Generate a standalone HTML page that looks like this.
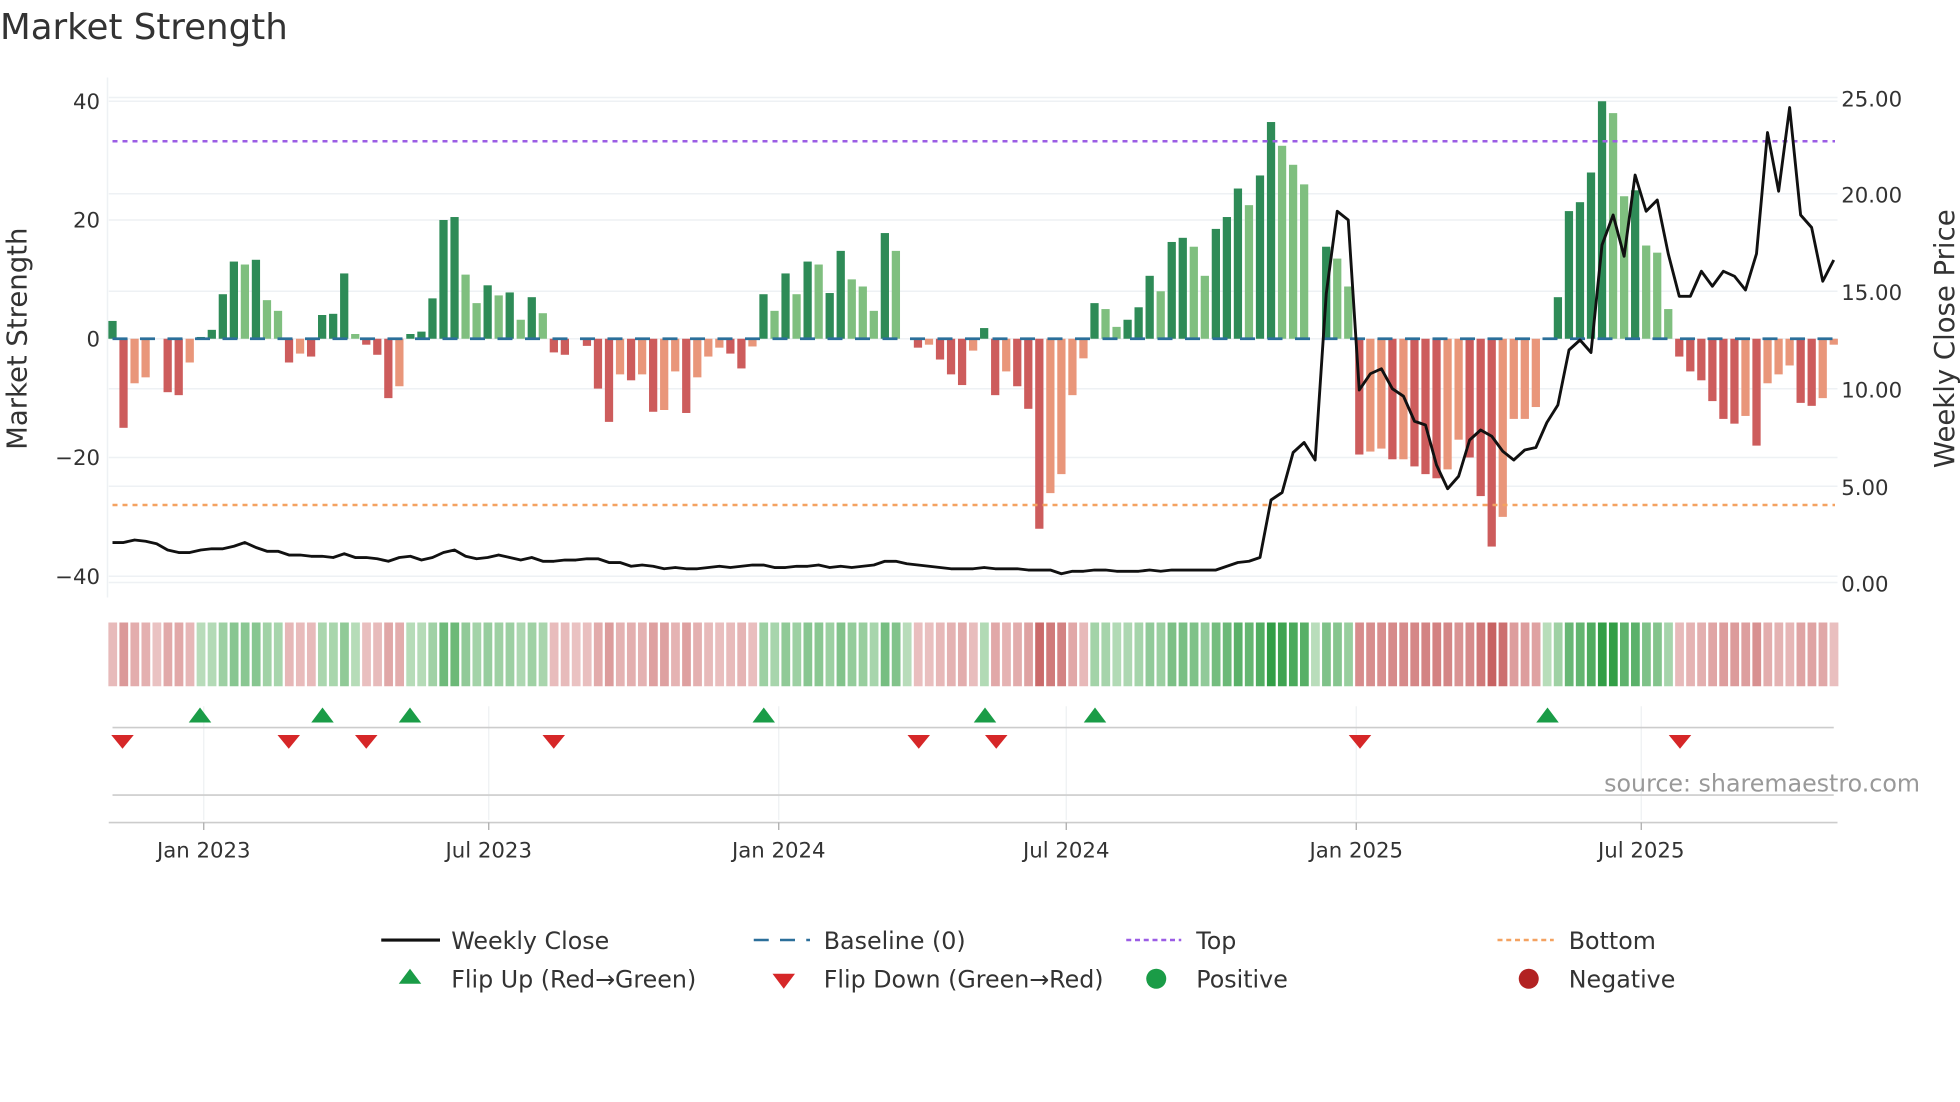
<!DOCTYPE html>
<html><head><meta charset="utf-8"><style>
html,body{margin:0;padding:0;background:#fff;}
svg{display:block;font-family:"DejaVu Sans","Liberation Sans",sans-serif;}
</style></head><body>
<svg id="s" width="1960" height="1102" viewBox="0 0 1568 881.6" xmlns="http://www.w3.org/2000/svg">
<rect width="1568" height="882" fill="#fff"/>
<text x="0" y="31" font-size="28.5" fill="#333">Market Strength</text>
<g stroke="#eef1f4" stroke-width="1.2">
<line x1="87" x2="1470" y1="81" y2="81"/><line x1="87" x2="1470" y1="176" y2="176"/>
<line x1="87" x2="1470" y1="271" y2="271"/><line x1="87" x2="1470" y1="366" y2="366"/>
<line x1="87" x2="1470" y1="461" y2="461"/>
<line x1="87" x2="1470" y1="78" y2="78"/><line x1="87" x2="1470" y1="155" y2="155"/>
<line x1="87" x2="1470" y1="233" y2="233"/><line x1="87" x2="1470" y1="311" y2="311"/>
<line x1="87" x2="1470" y1="389" y2="389"/><line x1="87" x2="1470" y1="466" y2="466"/>
<line x1="86" x2="86" y1="62" y2="478"/>
</g>
<g font-size="17" fill="#333" text-anchor="end">
<text x="80" y="87">40</text><text x="80" y="182">20</text><text x="80" y="277">0</text>
<text x="80" y="372">−20</text><text x="80" y="467">−40</text>
</g>
<g font-size="17" fill="#333">
<text x="1473" y="85">25.00</text><text x="1473" y="162">20.00</text><text x="1473" y="240">15.00</text>
<text x="1473" y="318">10.00</text><text x="1473" y="396">5.00</text><text x="1473" y="473">0.00</text>
</g>
<text transform="translate(21,271) rotate(-90)" font-size="22" fill="#333" text-anchor="middle">Market Strength</text>
<text transform="translate(1563,271) rotate(-90)" font-size="22" fill="#333" text-anchor="middle">Weekly Close Price</text>
<g id="bars"></g>
<line x1="90" x2="1468" y1="271" y2="271" stroke="#2b6f9a" stroke-width="2.2" stroke-dasharray="12,10"/>
<line x1="90" x2="1468" y1="113" y2="113" stroke="#9b5de5" stroke-width="2" stroke-dasharray="4,4"/>
<line x1="90" x2="1468" y1="404" y2="404" stroke="#f4a261" stroke-width="2" stroke-dasharray="4,4"/>
<polyline id="price" fill="none" stroke="#111" stroke-width="2.3" stroke-linejoin="round"/>
<g id="heat"></g>
<g stroke="#eef0f2" stroke-width="1"><line x1="163" x2="163" y1="565" y2="656"/><line x1="391" x2="391" y1="565" y2="656"/><line x1="623" x2="623" y1="565" y2="656"/><line x1="853" x2="853" y1="565" y2="656"/><line x1="1085" x2="1085" y1="565" y2="656"/><line x1="1313" x2="1313" y1="565" y2="656"/></g>
<line x1="90" x2="1467" y1="582" y2="582" stroke="#ccc" stroke-width="1.3"/>
<line x1="90" x2="1467" y1="636" y2="636" stroke="#ccc" stroke-width="1.3"/>
<line x1="87" x2="1470" y1="658" y2="658" stroke="#ccc" stroke-width="1.3"/>
<g id="flips"></g>
<text x="1536" y="633" font-size="19" fill="#999" text-anchor="end">source: sharemaestro.com</text>
<g stroke="#aaa"><line x1="163" x2="163" y1="658" y2="664"/><line x1="391" x2="391" y1="658" y2="664"/><line x1="623" x2="623" y1="658" y2="664"/><line x1="853" x2="853" y1="658" y2="664"/><line x1="1085" x2="1085" y1="658" y2="664"/><line x1="1313" x2="1313" y1="658" y2="664"/></g>
<g font-size="17" fill="#333" text-anchor="middle">
<text x="163" y="686">Jan 2023</text><text x="391" y="686">Jul 2023</text><text x="623" y="686">Jan 2024</text>
<text x="853" y="686">Jul 2024</text><text x="1085" y="686">Jan 2025</text><text x="1313" y="686">Jul 2025</text>
</g>
<g font-size="19" fill="#333">
<line x1="305" x2="352" y1="752" y2="752" stroke="#111" stroke-width="2.5"/>
<text x="361" y="759">Weekly Close</text>
<line x1="603" x2="648" y1="752" y2="752" stroke="#2b6f9a" stroke-width="2" stroke-dasharray="12,9"/>
<text x="659" y="759">Baseline (0)</text>
<line x1="901" x2="945" y1="752" y2="752" stroke="#9b5de5" stroke-width="2" stroke-dasharray="4,3"/>
<text x="957" y="759">Top</text>
<line x1="1198" x2="1243" y1="752" y2="752" stroke="#f4a261" stroke-width="2" stroke-dasharray="4,3"/>
<text x="1255" y="759">Bottom</text>
<polygon points="319,787 337,787 328,775" fill="#1a9c47"/>
<text x="361" y="790">Flip Up (Red→Green)</text>
<polygon points="618,779 636,779 627,791" fill="#d62728"/>
<text x="659" y="790">Flip Down (Green→Red)</text>
<circle cx="925" cy="783" r="8" fill="#1a9c47"/>
<text x="957" y="790">Positive</text>
<circle cx="1223" cy="783" r="8" fill="#b22222"/>
<text x="1255" y="790">Negative</text>
</g>
</svg>
<script>
var V=[[3,'d'],[-15,'r'],[-7.5,'s'],[-6.5,'s'],[0,'z'],[-9,'r'],[-9.5,'r'],[-4,'s'],[0.3,'d'],[1.5,'d'],[7.5,'d'],[13,'d'],[12.5,'l'],[13.3,'d'],[6.5,'l'],[4.7,'l'],[-4,'r'],[-2.5,'s'],[-3,'r'],[4,'d'],[4.2,'d'],[11,'d'],[0.8,'l'],[-1,'r'],[-2.7,'r'],[-10,'r'],[-8,'s'],[0.8,'d'],[1.2,'d'],[6.8,'d'],[20,'d'],[20.5,'d'],[10.8,'l'],[6,'l'],[9,'d'],[7.3,'l'],[7.8,'d'],[3.2,'l'],[7,'d'],[4.3,'l'],[-2.3,'r'],[-2.7,'r'],[0,'z'],[-1.2,'r'],[-8.4,'r'],[-14,'r'],[-6,'s'],[-7,'r'],[-6,'s'],[-12.3,'r'],[-12,'s'],[-5.5,'s'],[-12.5,'r'],[-6.5,'s'],[-3,'s'],[-1.5,'s'],[-2.5,'r'],[-5,'r'],[-1.3,'s'],[7.5,'d'],[4.7,'l'],[11,'d'],[7.5,'l'],[13,'d'],[12.5,'l'],[7.7,'d'],[14.8,'d'],[10,'l'],[8.8,'l'],[4.7,'l'],[17.8,'d'],[14.8,'l'],[0.3,'z'],[-1.5,'r'],[-1,'s'],[-3.5,'r'],[-6,'r'],[-7.8,'r'],[-2,'s'],[1.8,'d'],[-9.5,'r'],[-5.5,'s'],[-8,'r'],[-11.8,'r'],[-32,'r'],[-26,'s'],[-22.8,'s'],[-9.5,'s'],[-3.3,'s'],[6,'d'],[5,'l'],[2,'l'],[3.2,'d'],[5.3,'d'],[10.6,'d'],[8,'l'],[16.3,'d'],[17,'d'],[15.5,'l'],[10.6,'l'],[18.5,'d'],[20.5,'d'],[25.3,'d'],[22.5,'l'],[27.5,'d'],[36.5,'d'],[32.5,'l'],[29.3,'l'],[26,'l'],[0,'z'],[15.5,'d'],[13.5,'l'],[8.8,'l'],[-19.5,'r'],[-19,'s'],[-18.5,'s'],[-20.3,'r'],[-20.3,'s'],[-21.5,'r'],[-22.8,'r'],[-23.5,'r'],[-22,'s'],[-17,'s'],[-20,'r'],[-26.5,'r'],[-35,'r'],[-30,'s'],[-13.5,'s'],[-13.5,'s'],[-11.5,'s'],[0.2,'d'],[7,'d'],[21.5,'d'],[23,'d'],[28,'d'],[40,'d'],[38,'l'],[24,'l'],[25,'d'],[15.7,'l'],[14.5,'l'],[5,'l'],[-3,'r'],[-5.5,'r'],[-7,'r'],[-10.5,'r'],[-13.5,'r'],[-14.3,'r'],[-13,'s'],[-18,'r'],[-7.5,'s'],[-6,'s'],[-4.5,'s'],[-10.8,'r'],[-11.3,'r'],[-10,'s'],[-1,'s']];
var C={d:'#2e8b57',l:'#7fbf7f',r:'#cd5c5c',s:'#e9967a',z:'#ccc'};
var P=[434,434,432,433,435,440,442,442,440,439,439,437,434,438,441,441,444,444,445,445,446,443,446,446,447,449,446,445,448,446,442,440,445,447,446,444,446,448,446,449,449,448,448,447,447,450,450,453,452,453,455,454,455,455,454,453,454,453,452,452,454,454,453,453,452,454,453,454,453,452,449,449,451,452,453,454,455,455,455,454,455,455,455,456,456,456,459,457,457,456,456,457,457,457,456,457,456,456,456,456,456,453,450,449,446,400,394,362,354,368,235,169,176,312,299,295,311,317,337,340,372,391,381,352,344,349,361,368,360,358,338,324,280,272,282,196,172,205,140,169,160,203,237,237,217,229,217,221,232,203,106,153,86,172,182,225,208];
var ns='http://www.w3.org/2000/svg',b=document.getElementById('bars'),h=document.getElementById('heat');
function el(t,a,p){var e=document.createElementNS(ns,t);for(var k in a)e.setAttribute(k,a[k]);p.appendChild(e);return e;}
var step=(1467-90)/(V.length-1),pts=[];
var regime=[];
var segs=[[0,7,-1],[8,15,1],[16,18,-1],[19,22,1],[23,26,-1],[27,39,1],[40,58,-1],[59,72,1],[73,78,-1],[79,79,1],[80,88,-1],[89,112,1],[113,129,-1],[130,141,1],[142,156,-1]];
segs.forEach(function(s){for(var i=s[0];i<=s[1];i++)regime[i]=s[2];});
for(var i=0;i<V.length;i++){
 var x=90+i*step,v=V[i][0],y0=271,y=271-v*4.75;
 if(V[i][1]!='z')el('rect',{x:x-3.3,y:Math.min(y,y0),width:6.6,height:Math.max(Math.abs(y-y0),0.8),fill:C[V[i][1]]},b);
 var m=Math.min(1,(Math.abs(v)+4)/40),g=regime[i]||-1;
 var col=g>0?'rgb('+Math.round(200-150*m)+','+Math.round(228-70*m)+','+Math.round(200-130*m)+')':'rgb('+Math.round(238-40*m)+','+Math.round(205-110*m)+','+Math.round(205-110*m)+')';
 el('rect',{x:x-3.3,y:498,width:7,height:51,fill:col},h);
 if(i<P.length)pts.push(x.toFixed(1)+','+P[i]);
}
document.getElementById('price').setAttribute('points',pts.join(' '));
var f=document.getElementById('flips');
[160,258,328,611,788,876,1238].forEach(function(x){el('polygon',{points:(x-9)+',578 '+(x+9)+',578 '+x+',566',fill:'#1a9c47'},f);});
[98,231,293,443,735,797,1088,1344].forEach(function(x){el('polygon',{points:(x-9)+',588 '+(x+9)+',588 '+x+',599',fill:'#d62728'},f);});
</script>
</body></html>
